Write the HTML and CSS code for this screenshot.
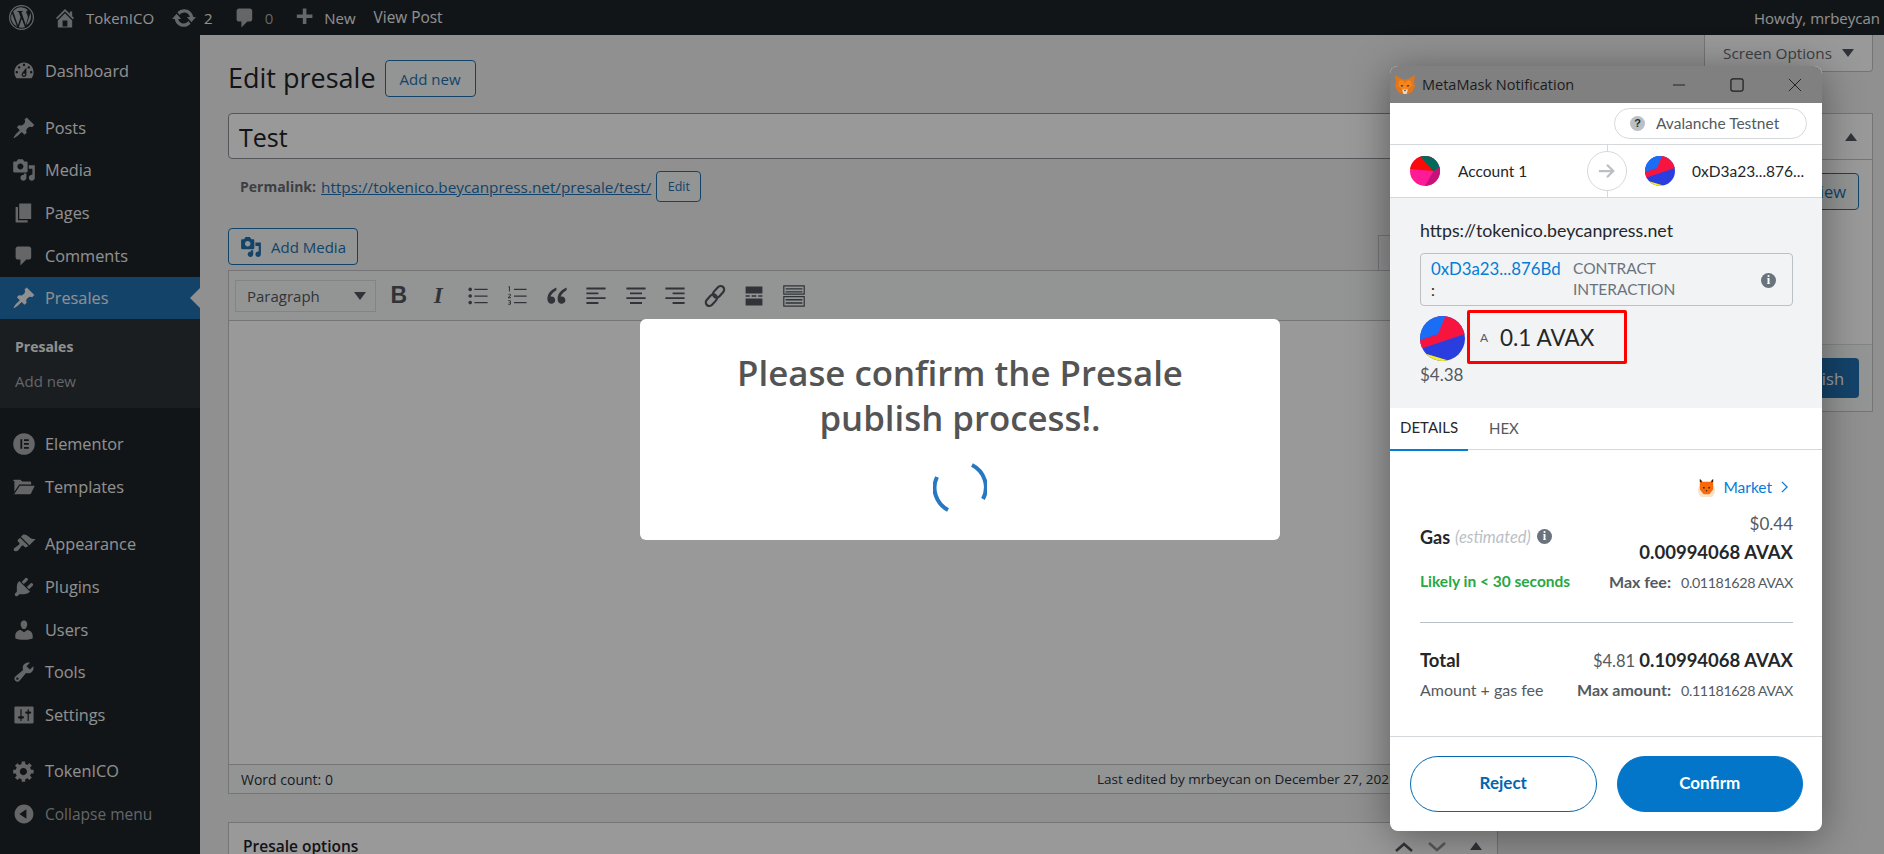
FILE: index.html
```html
<!DOCTYPE html>
<html lang="en">
    <head>
        <meta charset="UTF-8">
        <title>Edit presale</title>
        <link rel="stylesheet" href="styles.css">
    </head>
    <body>
        <div class="adminbar">
            <svg class="bar-logo" viewBox="0 0 20 20"><path fill-rule="evenodd" d="M10 0a10 10 0 1 0 0 20a10 10 0 0 0 0-20zM10 1a9 9 0 1 1 0 18a9 9 0 0 1 0-18z"/><path d="M10 1.700a8.300 8.300 0 0 0-7 3.900h.5l3.600 10.600l2.200-6.400l-1.500-4.200H6.900v-.8h4v.8h-1l3.500 10.400l1.200-3.900c.6-1.900.7-2.700.2-4c-.5-1.100-1-1.600-1-2.500c0-.8.6-1.500 1.500-1.500A8.300 8.300 0 0 0 10 1.700zM2.400 6.600a8.300 8.300 0 0 0 4.100 10.900zM10.200 10.900l-2.400 6.900a8.300 8.300 0 0 0 5 0zM16.800 5.900c.1 1.200-.2 2.300-.7 3.600l-2.300 6.900a8.300 8.300 0 0 0 3-10.500z"/></svg>
            <svg class="bar-icon bar-home" viewBox="0 0 20 20"><path d="M16 8.500l1.530 1.530-1.060 1.060L10 4.620l-6.470 6.470-1.060-1.060L10 2.500l4 4v-2h2v4zm-6-2.460l6 5.990V18H4v-5.970zM12 17v-5H8v5h4z"/></svg>
            <span class="bar-text bar-site">TokenICO</span>
            <svg class="bar-icon bar-update" viewBox="0 0 20 20"><path d="M10.200 3.280c3.530 0 6.430 2.610 6.920 6h2.080l-3.500 4-3.500-4h2.320c-.45-1.970-2.210-3.450-4.320-3.450-1.450 0-2.730.71-3.540 1.780L4.950 5.660C6.230 4.200 8.110 3.280 10.200 3.280zm-.4 13.440c-3.520 0-6.430-2.610-6.920-6H.8l3.500-4c1.170 1.330 2.330 2.670 3.500 4H5.480c.45 1.970 2.210 3.450 4.320 3.450 1.450 0 2.730-.71 3.540-1.780l1.710 1.950c-1.280 1.460-3.150 2.380-5.250 2.380z"/></svg>
            <span class="bar-text bar-count">2</span>
            <svg class="bar-icon bar-comment" viewBox="0 0 20 20"><path d="M5 2h9c1.100 0 2 .9 2 2v7c0 1.100-.9 2-2 2h-2l-5 5v-5H5c-1.100 0-2-.9-2-2V4c0-1.100.9-2 2-2z"/></svg>
            <span class="bar-text bar-count bar-zero">0</span>
            <svg class="bar-icon bar-plus" viewBox="0 0 20 20"><path d="M17 7v3h-5v5H9v-5H4V7h5V2h3v5h5z"/></svg>
            <span class="bar-text bar-new">New</span>
            <span class="bar-text bar-view">View Post</span>
            <span class="bar-text bar-howdy">Howdy, mrbeycan</span>
        </div>

        <div class="layout">
            <div class="sidebar">
                <div class="menu-item first">
                    <svg viewBox="0 0 20 20"><path d="M3.760 16h12.480c1.100-1.370 1.760-3.110 1.760-5 0-4.420-3.580-8-8-8s-8 3.580-8 8c0 1.890.66 3.630 1.760 5zM10 4c.55 0 1 .45 1 1s-.45 1-1 1-1-.45-1-1 .45-1 1-1zM6 6c.55 0 1 .45 1 1s-.45 1-1 1-1-.45-1-1 .45-1 1-1zm8 0c.55 0 1 .45 1 1s-.45 1-1 1-1-.45-1-1 .45-1 1-1zm-5.370 5.550L12 7v6c0 1.100-.9 2-2 2s-2-.9-2-2c0-.57.24-1.080.63-1.450zM4 10c.55 0 1 .45 1 1s-.45 1-1 1-1-.45-1-1 .45-1 1-1zm12 0c.55 0 1 .45 1 1s-.45 1-1 1-1-.45-1-1 .45-1 1-1zm-5 3c0-.55-.45-1-1-1s-1 .45-1 1 .45 1 1 1 1-.45 1-1z"/></svg>
                    <span>Dashboard</span>
                </div>
                <div class="menu-group">
                    <div class="menu-item">
                        <svg viewBox="0 0 20 20"><path d="M10.440 3.020l1.820-1.820 6.360 6.350-1.830 1.820c-1.050-.68-2.480-.57-3.410.36l-.75.75c-.92.93-1.040 2.350-.35 3.410l-1.830 1.820-2.410-2.410-2.800 2.790c-.42.42-3.380 2.710-3.800 2.290s1.860-3.390 2.280-3.810l2.790-2.790L4.100 9.360l1.830-1.820c1.050.69 2.480.57 3.400-.36l.75-.75c.93-.92 1.050-2.350.36-3.410z"/></svg>
                        <span>Posts</span>
                    </div>
                    <div class="menu-item">
                        <svg viewBox="0 0 20 20"><path d="M13 11V4c0-.55-.45-1-1-1h-1.670L9 1H5L3.670 3H2c-.55 0-1 .45-1 1v7c0 .55.45 1 1 1h10c.55 0 1-.45 1-1zM7 4.500c1.380 0 2.500 1.120 2.500 2.500S8.380 9.500 7 9.500 4.500 8.380 4.500 7 5.620 4.500 7 4.500zM14 6h5v10.500c0 1.380-1.120 2.500-2.500 2.500S14 17.880 14 16.500s1.120-2.500 2.500-2.500c.17 0 .34.02.5.05V9h-3V6zm-4 8.050V13h2v3.500c0 1.380-1.120 2.500-2.500 2.500S7 17.880 7 16.500 8.120 14 9.500 14c.17 0 .34.02.5.05z"/></svg>
                        <span>Media</span>
                    </div>
                    <div class="menu-item">
                        <svg viewBox="0 0 20 20"><path d="M6 15V2h10v13H6zm-1 1h8v2H3V5h2v11z"/></svg>
                        <span>Pages</span>
                    </div>
                    <div class="menu-item">
                        <svg viewBox="0 0 20 20"><path d="M5 2h9c1.100 0 2 .9 2 2v7c0 1.100-.9 2-2 2h-2l-5 5v-5H5c-1.100 0-2-.9-2-2V4c0-1.100.9-2 2-2z"/></svg>
                        <span>Comments</span>
                    </div>
                    <div class="menu-item current">
                        <svg viewBox="0 0 20 20"><path d="M10.440 3.020l1.820-1.820 6.360 6.350-1.830 1.820c-1.050-.68-2.480-.57-3.410.36l-.75.75c-.92.93-1.040 2.350-.35 3.410l-1.830 1.820-2.410-2.410-2.800 2.790c-.42.42-3.380 2.710-3.800 2.290s1.860-3.390 2.280-3.810l2.790-2.790L4.100 9.360l1.830-1.820c1.050.69 2.480.57 3.400-.36l.75-.75c.93-.92 1.050-2.350.36-3.410z"/></svg>
                        <span>Presales</span>
                    </div>
                    <div class="submenu">
                        <div class="submenu-item active">Presales</div>
                        <div class="submenu-item">Add new</div>
                    </div>
                </div>
                <div class="menu-group elementor-group">
                    <div class="menu-item">
                        <svg viewBox="0 0 20 20"><path fill-rule="evenodd" d="M10 1a9 9 0 1 0 0 18a9 9 0 0 0 0-18zM7 6h1.500v8H7zM10 6h4v1.500h-4zM10 9.200h4v1.500h-4zM10 12.500h4V14h-4z"/></svg>
                        <span>Elementor</span>
                    </div>
                    <div class="menu-item">
                        <svg viewBox="0 0 20 20"><path d="M1 5c0-.6.4-1 1-1h5l1.500 1.500H15c.6 0 1 .4 1 1V8H6L2 14V5zM6.500 9H19l-3.500 7H1.800z"/></svg>
                        <span>Templates</span>
                    </div>
                </div>
                <div class="menu-group appearance-group">
                    <div class="menu-item">
                        <svg viewBox="0 0 20 20"><path d="M14.480 11.060L7.410 3.990l1.500-1.500c.5-.56 2.300-.47 3.510.32 1.210.8 1.430 1.280 2.910 2.100 1.180.64 2.450 1.260 4.450.85zm-.71.71L6.700 4.700 4.930 6.470c-.39.39-.39 1.020 0 1.410l1.060 1.060c.39.39.39 1.030 0 1.420-.6.6-1.430 1.110-2.210 1.690-.35.26-.7.53-1.010.84C1.430 13.230 1 14.910 1.800 15.710c.8.8 2.480.37 3.820-.97.32-.32.58-.67.84-1.010.58-.78 1.090-1.610 1.690-2.210.39-.39 1.030-.39 1.420 0l1.060 1.060c.39.39 1.020.39 1.410 0z"/></svg>
                        <span>Appearance</span>
                    </div>
                    <div class="menu-item">
                        <svg viewBox="0 0 20 20"><path d="M13.110 4.360L9.870 7.600 8 5.730l3.240-3.240c.35-.34 1.050-.2 1.560.32.52.51.66 1.210.31 1.550zm-8 1.770l.91-1.120 9.010 9.010-1.190.84c-.71.71-2.630 1.160-3.820 1.160H6.140L4.900 17.260c-.59.59-1.540.59-2.120 0-.59-.58-.59-1.530 0-2.120l1.240-1.240v-3.880c0-1.130.4-3.190 1.090-3.890zm7.260 3.970l3.240-3.240c.34-.35 1.040-.21 1.550.31.52.51.66 1.210.31 1.550l-3.240 3.250z"/></svg>
                        <span>Plugins</span>
                    </div>
                    <div class="menu-item">
                        <svg viewBox="0 0 20 20"><path d="M10 9.250c-2.270 0-2.730-3.440-2.730-3.440C7 4.020 7.820 2 9.970 2c2.160 0 2.980 2.020 2.710 3.810 0 0-.41 3.440-2.680 3.440zm0 2.570L12.720 10c2.390 0 4.520 2.330 4.520 4.530v2.490s-3.650 1.130-7.240 1.130c-3.650 0-7.240-1.130-7.240-1.130v-2.490c0-2.250 1.940-4.480 4.470-4.480z"/></svg>
                        <span>Users</span>
                    </div>
                    <div class="menu-item">
                        <svg viewBox="0 0 20 20"><path d="M16.680 9.770c-1.340 1.340-3.300 1.670-4.950.99l-5.410 6.520c-.99.99-2.590.99-3.580 0s-.99-2.590 0-3.570l6.520-5.420c-.68-1.650-.35-3.610.99-4.950 1.280-1.280 3.120-1.620 4.720-1.060l-2.890 2.890 2.820 2.820 2.860-2.870c.53 1.580.18 3.390-1.080 4.650zM3.810 16.210c.4.39 1.040.39 1.430 0 .4-.4.4-1.040 0-1.430-.39-.4-1.030-.4-1.430 0-.39.39-.39 1.030 0 1.430z"/></svg>
                        <span>Tools</span>
                    </div>
                    <div class="menu-item">
                        <svg viewBox="0 0 20 20"><path d="M18 16V4c0-.55-.45-1-1-1H3c-.55 0-1 .45-1 1v12c0 .55.45 1 1 1h14c.55 0 1-.45 1-1zM8 11h1c.55 0 1 .45 1 1s-.45 1-1 1H8v1.500c0 .28-.22.5-.5.5s-.5-.22-.5-.5V13H6c-.55 0-1-.45-1-1s.45-1 1-1h1V5.500c0-.28.22-.5.5-.5s.5.22.5.5V11zm5-2h-1c-.55 0-1-.45-1-1s.45-1 1-1h1V5.500c0-.28.22-.5.5-.5s.5.22.5.5V7h1c.55 0 1 .45 1 1s-.45 1-1 1h-1v5.500c0 .28-.22.5-.5.5s-.5-.22-.5-.5V9z"/></svg>
                        <span>Settings</span>
                    </div>
                </div>
                <div class="menu-group token-group">
                    <div class="menu-item">
                        <svg viewBox="0 0 20 20"><path d="M18 12h-2.180c-.17.7-.44 1.350-.81 1.930l1.540 1.540-2.100 2.100-1.540-1.540c-.58.36-1.230.63-1.910.79V19H8v-2.180c-.68-.16-1.330-.43-1.910-.79l-1.540 1.540-2.120-2.120 1.540-1.540c-.36-.58-.63-1.230-.79-1.910H1V9.030h2.170c.16-.7.44-1.350.8-1.940L2.430 5.550l2.100-2.100 1.540 1.540c.58-.37 1.240-.64 1.930-.81V2h3v2.180c.68.16 1.330.43 1.910.79l1.540-1.540 2.120 2.120-1.540 1.540c.36.59.64 1.240.8 1.940H18V12zm-8.500 1.500c1.660 0 3-1.340 3-3s-1.340-3-3-3-3 1.340-3 3 1.340 3 3 3z"/></svg>
                        <span>TokenICO</span>
                    </div>
                    <div class="menu-item collapse">
                        <svg viewBox="0 0 20 20"><path d="M10 2.160c4.330 0 7.840 3.510 7.840 7.840s-3.510 7.840-7.840 7.840S2.160 14.330 2.160 10 5.710 2.160 10 2.160zm2 11.720V6.120L6.180 9.970z"/></svg>
                        <span>Collapse menu</span>
                    </div>
                </div>
            </div>

            <div class="content">
                <div class="page-head">
                    <h1>Edit presale</h1>
                    <a class="btn add-new">Add new</a>
                    <div class="screen-tab">Screen Options <i class="caret"></i></div>
                </div>
                <div class="columns">
                    <div class="main-col">
                        <div class="title-input">Test</div>
                        <div class="permalink">
                            <b>Permalink:</b>
                            <a>https://tokenico.beycanpress.net/presale/test/</a>
                            <span class="btn edit-slug">Edit</span>
                        </div>
                        <div class="media-row">
                            <span class="btn add-media">
                                <svg viewBox="0 0 20 20"><path d="M13 11V4c0-.55-.45-1-1-1h-1.670L9 1H5L3.670 3H2c-.55 0-1 .45-1 1v7c0 .55.45 1 1 1h10c.55 0 1-.45 1-1zM7 4.500c1.380 0 2.500 1.120 2.500 2.500S8.380 9.500 7 9.500 4.500 8.380 4.500 7 5.620 4.500 7 4.500zM14 6h5v10.500c0 1.380-1.120 2.500-2.500 2.500S14 17.880 14 16.500s1.120-2.500 2.500-2.500c.17 0 .34.02.5.05V9h-3V6zm-4 8.050V13h2v3.500c0 1.380-1.120 2.500-2.500 2.500S7 17.880 7 16.500 8.120 14 9.500 14c.17 0 .34.02.5.05z"/></svg>
                                Add Media
                            </span>
                            <div class="editor-tabs"></div>
                        </div>
                        <div class="editor">
                            <div class="toolbar">
                                <div class="format-select">Paragraph <i class="caret"></i></div>
                                <div class="tools">
                                    <span class="tool tool-b">B</span>
                                    <span class="tool tool-i">I</span>
                                    <span class="tool"><svg viewBox="0 0 20 20"><circle cx="3.500" cy="4.500" r="1.500"/><circle cx="3.500" cy="10" r="1.500"/><circle cx="3.500" cy="15.500" r="1.500"/><path d="M7 4h11v1.100H7zM7 9.500h11v1.100H7zM7 15h11v1.100H7z"/></svg></span>
                                    <span class="tool"><svg viewBox="0 0 20 20"><path d="M2.500 2.500l1-.6h.6v4.300H3.300V3zM2.500 8.500c.6-.7 2.500-.6 2.500.6c0 .8-1 1.300-1.600 2h1.600v.7H2.500v-.7c.6-.8 1.700-1.400 1.700-2c0-.5-1-.4-1.500 0zM2.500 13.800c.8-.6 2.500-.4 2.500.6c0 .5-.3.7-.6.9c.4.1.7.4.7.9c0 1.200-1.900 1.300-2.600.6l.3-.5c.4.4 1.500.4 1.500-.2c0-.4-.5-.5-1-.5v-.6c.5 0 .9-.1.9-.5c0-.5-1-.4-1.500 0zM7.500 4H18v1.100H7.500zM7.500 9.500H18v1.100H7.500zM7.500 15H18v1.100H7.500z"/></svg></span>
                                    <span class="tool"><svg viewBox="0 0 20 20"><path d="M9.500 3C5 5 2 8 2 12.500c0 2.600 1.400 4 3.300 4c1.700 0 3.200-1.300 3.200-3c0-1.700-1.300-3-3-3c-.4 0-.7.1-1 .2c.3-1.800 2.300-4 5-5.500zM18 3c-4.500 2-7.500 5-7.500 9.500c0 2.600 1.400 4 3.300 4c1.700 0 3.200-1.300 3.200-3c0-1.700-1.300-3-3-3c-.4 0-.7.1-1 .2c.3-1.800 2.300-4 5-5.500z"/></svg></span>
                                    <span class="tool"><svg viewBox="0 0 20 20"><path d="M2 3h16v1.600H2zM2 7h10v1.600H2zM2 11h16v1.600H2zM2 15h10v1.600H2z"/></svg></span>
                                    <span class="tool"><svg viewBox="0 0 20 20"><path d="M2 3h16v1.600H2zM5 7h10v1.600H5zM2 11h16v1.600H2zM5 15h10v1.600H5z"/></svg></span>
                                    <span class="tool"><svg viewBox="0 0 20 20"><path d="M2 3h16v1.600H2zM8 7h10v1.600H8zM2 11h16v1.600H2zM8 15h10v1.600H8z"/></svg></span>
                                    <span class="tool"><svg viewBox="0 0 20 20"><g fill="none" stroke-width="1.800" class="chain"><rect x="10" y="1" width="6" height="11" rx="3" transform="rotate(42 13 6.500)"/><rect x="4" y="8" width="6" height="11" rx="3" transform="rotate(42 7 13.500)"/></g></svg></span>
                                    <span class="tool"><svg viewBox="0 0 20 20"><path d="M3 2h14v6H3zM3 12h14v6H3zM3 9.300h3.500v1.400H3zM8 9.300h4v1.400H8zM13.500 9.300H17v1.400h-3.500z"/></svg></span>
                                    <span class="tool"><svg viewBox="0 0 20 20"><path fill-rule="evenodd" d="M1 1h18v8H1zM2 2v6h16V2zM1 10h18v9H1zM2 11v7h16v-7z"/><path d="M3 3.500h14v1H3zM3 6h14v1H3zM3 12.500h14v1.200H3zM3 15.200h14v1.200H3z"/></svg></span>
                                </div>
                            </div>
                            <div class="editor-area"></div>
                            <div class="editor-foot">
                                <span class="word-count">Word count: 0</span>
                                <span>Last edited by mrbeycan on December 27, 2021 at 9:43 pm</span>
                            </div>
                        </div>
                        <div class="postbox">
                            <h2>Presale options</h2>
                            <div class="postbox-handles">
                                <svg viewBox="0 0 20 12"><path d="M2 10l8-7l8 7" fill="none" stroke-width="2.500" class="chev"/></svg>
                                <svg viewBox="0 0 20 12" class="chev-down"><path d="M2 2l8 7l8-7" fill="none" stroke-width="2.500" class="chev"/></svg>
                                <i class="caret up"></i>
                            </div>
                        </div>
                    </div>
                    <div class="side-col">
                        <div class="publish-box">
                            <div class="publish-head"><i class="caret up"></i></div>
                            <div class="publish-body"><span class="btn preview">Preview</span></div>
                            <div class="publish-foot"><span class="publish-btn">Publish</span></div>
                        </div>
                    </div>
                </div>
            </div>
        </div>

        <div class="dim"></div>

        <div class="confirm-modal">
            <h2>Please confirm the Presale<br>publish process!.</h2>
            <svg class="loader" viewBox="0 0 54 54"><path d="M39 5A25 25 0 0 1 50 39M4 17A25 25 0 0 0 15 50" fill="none" stroke="#2778c4" stroke-width="4"/></svg>
        </div>

        <div class="mm-window">
            <div class="mm-titlebar">
                <svg class="mm-fox" viewBox="0 0 20 20"><path fill="#e2761b" d="M0 0l7.500 4.500h5L20 0l-1 7l1 4l-3 6l-4 2H7l-4-2l-3-6l1-4z"/><path fill="#f6851b" d="M4 6l3-1l3 3l3-3l3 1l1 5l-4 3H7l-4-3z"/><path fill="#f5d7b8" d="M7 14.500h6l-1.500 4.500h-3z"/><path fill="#233447" d="M5.500 10l3 .5l-1.500 1.500zM14.500 10l-3 .5l1.500 1.500zM9 15h2l-1 1.500z"/></svg>
                <span class="mm-title">MetaMask Notification</span>
                <svg class="win-btn" viewBox="0 0 15 15"><path d="M1 7.500h13" stroke="#1c1c1c" stroke-width="1"/></svg>
                <svg class="win-btn" viewBox="0 0 15 15"><rect x="1" y="1" width="13" height="13" rx="2" fill="none" stroke="#1c1c1c" stroke-width="1.300"/></svg>
                <svg class="win-btn" viewBox="0 0 15 15"><path d="M1 1l13 13M14 1L1 14" stroke="#1c1c1c" stroke-width="1"/></svg>
            </div>
            <div class="mm-network-row">
                <div class="mm-network"><i class="mm-help">?</i>Avalanche Testnet</div>
            </div>
            <div class="mm-accounts">
                <div class="mm-account from">
                    <svg class="avatar" viewBox="0 0 30 30"><rect width="30" height="30" fill="#ff1a96"/><path fill="#fb0a0a" d="M0 0h30L23 15L0 13z"/><path fill="#03695c" d="M10 0h20v13l-6 3z"/><path fill="#c7127a" d="M30 10v20H15l8-14z"/></svg>
                    <span>Account 1</span>
                </div>
                <div class="mm-account to">
                    <svg class="avatar" viewBox="0 0 30 30"><use href="#token-pie"/></svg>
                    <span>0xD3a23...876...</span>
                </div>
                <div class="mm-arrow"><svg viewBox="0 0 20 20"><path d="M1 10h16M10 3l7 7l-7 7" fill="none" stroke="#bbc0c5" stroke-width="2.500"/></svg></div>
            </div>
            <div class="mm-summary">
                <div class="mm-origin">https://tokenico.beycanpress.net</div>
                <div class="mm-contract">
                    <div class="mm-addr"><a>0xD3a23...876Bd</a><br>:</div>
                    <div class="mm-type">Contract interaction</div>
                    <i class="mm-info">i</i>
                </div>
                <div class="mm-amount">
                    <svg class="token" viewBox="0 0 30 30"><defs><g id="token-pie"><rect width="30" height="30" fill="#2a3ee0"/><path fill="#f7153f" d="M12 0h18v12L0 22v-6l12-4z"/><path fill="#1a6ef5" d="M0 0h17l-5 12L0 16z"/><path fill="#f4f01a" d="M0 24l20 6H0z"/></g></defs><use href="#token-pie"/></svg>
                    <div class="mm-redbox"><span class="small-a">A</span><span class="mm-value">0.1 AVAX</span></div>
                </div>
                <div class="mm-fiat">$4.38</div>
            </div>
            <div class="mm-tabs">
                <span class="mm-tab active">DETAILS</span>
                <span class="mm-tab">HEX</span>
            </div>
            <div class="mm-details">
                <div class="mm-market">
                    <svg class="market-fox" viewBox="0 0 20 20"><circle cx="10" cy="13" r="9" fill="#fbe3c8"/><path fill="#f66a0a" d="M3 1l3 3h8l3-3v11l-4 5H7l-4-5z"/><path fill="#241b12" d="M3 1l1.800 1.800v2L3 4zM17 1l-1.800 1.800v2L17 4zM6.500 9.500h1.500V11H6.500zM12 9.500h1.500V11H12zM9 13h2l-1 1.500z"/></svg>
                    <a>Market</a>
                    <svg class="chevron" viewBox="0 0 8 14"><path d="M1 1l6 6l-6 6" fill="none" stroke="#037dd6" stroke-width="1.500"/></svg>
                </div>
                <div class="mm-row gas">
                    <div class="mm-label"><b>Gas</b> <em>(estimated)</em> <i class="mm-info">i</i></div>
                    <div class="mm-right"><div>$0.44</div><b>0.00994068 AVAX</b></div>
                </div>
                <div class="mm-row sub">
                    <span class="likely">Likely in &lt; 30 seconds</span>
                    <span><b>Max fee:</b><span class="sub-value">0.01181628 AVAX</span></span>
                </div>
                <hr class="mm-sep">
                <div class="mm-row total">
                    <b>Total</b>
                    <span>$4.81 <b>0.10994068 AVAX</b></span>
                </div>
                <div class="mm-row sub">
                    <span>Amount + gas fee</span>
                    <span><b>Max amount:</b><span class="sub-value">0.11181628 AVAX</span></span>
                </div>
            </div>
            <div class="mm-footer">
                <span class="mm-btn reject">Reject</span>
                <span class="mm-btn confirm">Confirm</span>
            </div>
        </div>
    </body>
</html>
```

FILE: styles.css
```css
body {
    margin: 0;
    width: 1884px;
    height: 854px;
    overflow: hidden;
    background-color: #f0f0f1;
    color: #1d2327;
    font-family: "Open Sans", "Noto Sans", sans-serif;
    font-size: 15px;
    position: relative;
}

svg {
    fill: currentColor;
    flex-shrink: 0;
}

/* admin bar */
.adminbar {
    height: 35px;
    background-color: #1d2327;
    color: #f0f0f1;
    display: flex;
    align-items: center;
    padding: 0 4px 0 9px;
}

.bar-logo { width: 25px; height: 25px; color: #a7aaad; }
.bar-icon { width: 24px; height: 24px; color: #a7aaad; }
.bar-text { font-size: 15px; white-space: nowrap; }

.bar-home { margin-left: 19px; }
.bar-site { margin-left: 9px; }
.bar-update { margin-left: 17px; width: 26px; height: 26px; }
.bar-count { margin-left: 7px; }
.bar-comment { margin-left: 20px; }
.bar-zero { margin-left: 8px; color: #a7aaad; }
.bar-plus { margin-left: 19px; }
.bar-new { margin-left: 8px; }
.bar-view { margin-left: 18px; font-size: 15.4px; }
.bar-howdy { margin-left: auto; }

.layout {
    display: flex;
    height: 819px;
}

/* sidebar */
.sidebar {
    width: 200px;
    flex-shrink: 0;
    background-color: #1d2327;
    color: #f0f0f1;
    padding-top: 15px;
}

.menu-item {
    height: 42.8px;
    display: flex;
    align-items: center;
    padding-left: 12px;
    font-size: 16.3px;
    position: relative;
}

.menu-item svg {
    width: 24px;
    height: 24px;
    margin-right: 9px;
    color: #a7aaad;
}

.menu-item.collapse { color: #a7aaad; font-size: 15.5px; }
.menu-item.current { height: 42px; background-color: #2271b1; }
.menu-item.current svg { color: #f0f0f1; }

.menu-item.current::after {
    content: "";
    position: absolute;
    right: 0;
    top: 11px;
    border: 10px solid transparent;
    border-left: 0;
    border-right-color: #f0f0f1;
}

.menu-group { margin-top: 13.5px; }
.elementor-group { margin-top: 14.5px; }
.appearance-group { margin-top: 14px; }
.token-group { margin-top: 13px; }

.submenu {
    height: 89px;
    background-color: #2c3338;
    padding-top: 11px;
    box-sizing: border-box;
}

.submenu-item {
    height: 34px;
    line-height: 34px;
    padding-left: 15px;
    font-size: 15px;
    color: #a7aaad;
}

.submenu-item.active { color: #f0f0f1; font-weight: 700; font-size: 14px; }

/* main area */
.content {
    flex: 1;
    padding: 0 11px 0 28px;
    min-width: 0;
}

.page-head {
    height: 78px;
    display: flex;
    align-items: flex-start;
}

h1 {
    margin: 24px 0 0;
    font-size: 27px;
    line-height: 38px;
    font-weight: 400;
}

.btn {
    border: 1px solid #2271b1;
    border-radius: 4px;
    color: #2271b1;
    background-color: #f6f7f7;
    box-sizing: border-box;
    display: inline-flex;
    align-items: center;
    justify-content: center;
    white-space: nowrap;
}

.add-new {
    margin: 25px 0 0 9px;
    width: 91px;
    height: 37px;
    font-size: 15px;
}

.screen-tab {
    margin-left: auto;
    width: 169px;
    height: 37px;
    box-sizing: border-box;
    background-color: #fff;
    border: 1px solid #c3c4c7;
    border-top: 0;
    border-radius: 0 0 4px 4px;
    color: #646970;
    display: flex;
    align-items: center;
    justify-content: center;
    gap: 10px;
    font-size: 15.3px;
}

.caret {
    border-left: 6px solid transparent;
    border-right: 6px solid transparent;
    border-top: 8px solid #50575e;
    display: inline-block;
}

.caret.up {
    border-top: 0;
    border-bottom: 8px solid #50575e;
}

.columns {
    display: flex;
    gap: 20px;
}

.main-col { width: 1270px; }
.side-col { width: 355px; }

.title-input {
    height: 46px;
    box-sizing: border-box;
    background-color: #fff;
    border: 1px solid #8c8f94;
    border-radius: 4px;
    padding-left: 10px;
    font-size: 25px;
    line-height: 46px;
}

.permalink {
    margin-top: 12px;
    height: 31px;
    padding-left: 12px;
    display: flex;
    align-items: center;
    font-size: 14px;
    color: #646970;
}

.permalink b { margin-right: 5px; }
.permalink a { color: #2271b1; text-decoration: underline; font-size: 15.3px; }

.edit-slug {
    margin-left: 5px;
    width: 45px;
    height: 31px;
    font-size: 12.5px;
}

.media-row {
    margin-top: 26px;
    height: 42px;
    display: flex;
    justify-content: space-between;
    align-items: flex-start;
}

.add-media {
    width: 130px;
    height: 37px;
    gap: 9px;
    font-size: 15px;
}

.add-media svg { width: 22px; height: 22px; }

.editor-tabs {
    width: 120px;
    height: 35px;
    margin-top: 7px;
    box-sizing: border-box;
    border: 1px solid #c3c4c7;
    border-bottom: 0;
}

.editor {
    height: 524px;
    box-sizing: border-box;
    background-color: #fff;
    border: 1px solid #c3c4c7;
    display: flex;
    flex-direction: column;
}

.toolbar {
    height: 50px;
    flex-shrink: 0;
    box-sizing: border-box;
    background-color: #f6f7f7;
    border-bottom: 1px solid #c3c4c7;
    display: flex;
    align-items: center;
    padding-left: 6px;
}

.format-select {
    width: 141px;
    height: 32px;
    box-sizing: border-box;
    border: 1px solid #dcdcde;
    padding: 0 9px 0 11px;
    display: flex;
    align-items: center;
    justify-content: space-between;
    font-size: 15px;
    color: #50575e;
}

.tools {
    display: flex;
    margin-left: 3px;
    color: #50575e;
}

.tool {
    width: 39.5px;
    text-align: center;
    height: 26px;
    display: flex;
    align-items: center;
    justify-content: center;
}

.tool svg { width: 24px; height: 24px; }
.chain { stroke: currentColor; }

.tool-b { font: 700 23px "Liberation Sans", sans-serif; }
.tool-i { font: italic 700 23px "Liberation Serif", serif; }

.editor-area { flex: 1; }

.editor-foot {
    height: 29px;
    flex-shrink: 0;
    box-sizing: border-box;
    background-color: #f6f7f7;
    border-top: 1px solid #c3c4c7;
    padding-left: 12px;
    display: flex;
    align-items: center;
    font-size: 13.5px;
    white-space: nowrap;
    color: #2c3338;
}

.word-count { width: 856px; font-size: 14px; }

.postbox {
    margin-top: 28px;
    height: 60px;
    box-sizing: border-box;
    background-color: #fff;
    border: 1px solid #c3c4c7;
    padding: 12px 0 0 14px;
    display: flex;
    justify-content: space-between;
}

.postbox h2 {
    margin: 0;
    font-size: 15.5px;
    font-weight: 600;
}

.postbox-handles {
    display: flex;
    align-items: flex-start;
    padding: 6px 15px 0 0;
    color: #1d2327;
}

.postbox-handles svg { width: 20px; height: 12px; }
.chev { stroke: #50575e; }
.chev-down { margin-left: 13px; opacity: .6; }
.postbox-handles .caret { margin: 1px 0 0 23px; }

.publish-box {
    height: 299px;
    box-sizing: border-box;
    background-color: #fff;
    border: 1px solid #c3c4c7;
    display: flex;
    flex-direction: column;
}

.publish-head {
    height: 46px;
    box-sizing: border-box;
    border-bottom: 1px solid #c3c4c7;
    display: flex;
    justify-content: flex-end;
    align-items: center;
    padding-right: 15px;
}

.publish-body {
    flex: 1;
    padding: 13px 13px 0;
    display: flex;
    justify-content: flex-end;
    align-items: flex-start;
}

.preview {
    width: 100px;
    height: 37px;
    font-size: 16.5px;
    justify-content: flex-end;
    padding-right: 12px;
}

.publish-foot {
    height: 67px;
    box-sizing: border-box;
    background-color: #f6f7f7;
    border-top: 1px solid #dcdcde;
    padding: 13px 13px 0;
    display: flex;
    justify-content: flex-end;
}

.publish-btn {
    width: 100px;
    height: 40px;
    border-radius: 4px;
    background-color: #2271b1;
    color: #fff;
    display: flex;
    align-items: center;
    justify-content: flex-end;
    padding-right: 15px;
    box-sizing: border-box;
    font-size: 16.5px;
}

/* overlay */
.dim {
    position: absolute;
    inset: 0;
    background-color: rgba(0, 0, 0, .4);
}

.confirm-modal {
    position: absolute;
    left: 640px;
    top: 319px;
    width: 640px;
    height: 221px;
    background-color: #fff;
    border-radius: 6px;
    text-align: center;
    padding-top: 31px;
    box-sizing: border-box;
}

.confirm-modal h2 {
    margin: 0;
    font-size: 34.8px;
    line-height: 45px;
    font-weight: 600;
    color: #545454;
}

.loader {
    display: block;
    width: 54px;
    height: 54px;
    margin: 20px auto 0;
}

/* metamask window */
.mm-window {
    position: absolute;
    left: 1390px;
    top: 66px;
    width: 432px;
    height: 765px;
    background-color: #fff;
    border-radius: 8px;
    overflow: hidden;
    box-shadow: 0 6px 40px rgba(0, 0, 0, .4);
    display: flex;
    flex-direction: column;
    font-family: Lato, "Open Sans", sans-serif;
    color: #24272a;
}

.mm-titlebar {
    height: 37px;
    flex-shrink: 0;
    background-color: #808080;
    display: flex;
    align-items: center;
    padding-left: 5px;
    color: #1c1c1c;
    font-family: "Open Sans", sans-serif;
}

.mm-fox { width: 20px; height: 20px; }
.mm-title { margin: 0 0 0 7px; font-size: 14.5px; width: 250px; }
.win-btn { width: 14px; height: 14px; }
.mm-titlebar .win-btn + .win-btn { margin-left: 44px; }

.mm-network-row {
    height: 42px;
    flex-shrink: 0;
    box-sizing: border-box;
    border-bottom: 1px solid #d6d9dc;
    display: flex;
    justify-content: flex-end;
    align-items: center;
    padding: 0 15px 1px 0;
}

.mm-network {
    width: 193px;
    height: 31px;
    box-sizing: border-box;
    border: 1px solid #d6d9dc;
    border-radius: 16px;
    display: flex;
    align-items: center;
    padding-left: 15px;
    font-size: 15.5px;
    color: #535a61;
}

.mm-help {
    width: 15px;
    height: 15px;
    border-radius: 50%;
    background-color: #bbc0c5;
    color: #24272a;
    font: 700 11px/15px "Liberation Sans", sans-serif;
    text-align: center;
    margin-right: 11px;
}

.mm-accounts {
    height: 53px;
    flex-shrink: 0;
    box-sizing: border-box;
    border-bottom: 1px solid #d6d9dc;
    display: flex;
    position: relative;
    font-size: 15.5px;
}

.mm-account {
    display: flex;
    align-items: center;
}

.mm-account.from { width: 255px; padding-left: 20px; box-sizing: border-box; gap: 18px; }
.mm-account.to { gap: 17px; }

.avatar { width: 30px; height: 30px; border-radius: 50%; }

.mm-arrow {
    position: absolute;
    left: 197px;
    top: 6px;
    width: 40px;
    height: 40px;
    box-sizing: border-box;
    background-color: #fff;
    border: 1px solid #d6d9dc;
    border-radius: 50%;
    display: flex;
    align-items: center;
    justify-content: center;
}

.mm-arrow::before,
.mm-arrow::after {
    content: "";
    position: absolute;
    left: 19px;
    width: 1px;
    height: 7px;
    background-color: #d6d9dc;
}

.mm-arrow::before { top: -7px; }
.mm-arrow::after { bottom: -7px; }

.mm-arrow svg { width: 18px; height: 18px; }

.mm-summary {
    height: 210px;
    flex-shrink: 0;
    box-sizing: border-box;
    background-color: #f2f3f4;
    padding: 20px 29px 0 30px;
}

.mm-origin { height: 24px; line-height: 24px; font-size: 17.8px; }

.mm-contract {
    margin-top: 11px;
    height: 53px;
    box-sizing: border-box;
    border: 1px solid #bbc0c5;
    border-radius: 4px;
    padding: 4px 16px 0 10px;
    display: flex;
    line-height: 21px;
    font-size: 15.5px;
}

.mm-addr { width: 142px; flex-shrink: 0; }
.mm-addr a { color: #037dd6; font-size: 16.8px; }
.mm-type { width: 150px; text-transform: uppercase; color: #6a737d; }

.mm-info {
    width: 15px;
    height: 15px;
    border-radius: 50%;
    background-color: #6a737d;
    color: #fff;
    font: 700 12px/15px "Liberation Serif", serif;
    text-align: center;
    display: inline-block;
}

.mm-contract .mm-info { margin: 15px 0 0 auto; }

.mm-amount {
    margin-top: 4px;
    display: flex;
    align-items: center;
    height: 54px;
}

.token { width: 45px; height: 45px; border-radius: 50%; margin-top: 3px; }

.mm-redbox {
    margin-left: 2px;
    width: 160px;
    height: 54px;
    box-sizing: border-box;
    border: 3px solid #f00;
    border-radius: 2px;
    display: flex;
    align-items: center;
    padding-left: 10px;
}

.small-a { font-size: 12px; color: #535a61; width: 20px; }
.mm-value { font-size: 22.5px; }

.mm-fiat { height: 24px; line-height: 22px; font-size: 17px; color: #535a61; }

.mm-tabs {
    height: 42px;
    flex-shrink: 0;
    box-sizing: border-box;
    border-bottom: 1px solid #d6d9dc;
    display: flex;
    font-size: 15px;
}

.mm-tab {
    padding: 0 10px;
    line-height: 40px;
    color: #535a61;
    margin-left: 11px;
}

.mm-tab.active {
    width: 58px;
    margin-left: 0;
    color: #24272a;
    height: 41px;
    border-bottom: 2px solid #037dd6;
    line-height: 38px;
}

.mm-details {
    flex: 1;
    padding: 0 29px 0 30px;
    font-size: 17px;
    white-space: nowrap;
}

.mm-market {
    margin-top: 25px;
    height: 24px;
    display: flex;
    justify-content: flex-end;
    align-items: center;
    color: #037dd6;
    font-size: 15.5px;
    padding-right: 5px;
}

.market-fox { width: 19px; height: 19px; margin-right: 7px; }
.chevron { width: 7px; height: 12px; margin-left: 9px; }

.mm-row {
    display: flex;
    justify-content: space-between;
    align-items: center;
}

.mm-row.gas {
    margin-top: 11px;
    height: 56px;
    align-items: flex-start;
}

.mm-label { display: flex; align-items: center; gap: 5px; height: 56px; font-size: 18px; padding-bottom: 3px; box-sizing: border-box; }
.mm-label em { color: #bbc0c5; font-size: 16.5px; }
.mm-label .mm-info { margin-left: 1px; }

.mm-right { text-align: right; line-height: 28px; color: #535a61; }
.mm-right b { color: #24272a; font-size: 18.5px; }

.mm-row.sub {
    margin-top: 3px;
    height: 24px;
    font-size: 16px;
    color: #535a61;
}

.sub-value { margin-left: 10px; font-size: 14.3px; letter-spacing: -.4px; }
.likely { color: #28a745; font-weight: 700; font-size: 15.5px; }

.mm-sep {
    margin: 29px 0 0;
    border: 0;
    border-top: 1px solid #bbc0c5;
}

.mm-row.total {
    margin-top: 23px;
    height: 28px;
    font-size: 16.5px;
    color: #535a61;
}

.mm-row.total b { color: #24272a; font-size: 18.5px; }

.mm-footer {
    height: 95px;
    flex-shrink: 0;
    box-sizing: border-box;
    border-top: 1px solid #d6d9dc;
    padding: 19px 19px 0 20px;
    display: flex;
    gap: 20px;
}

.mm-btn {
    flex: 1;
    height: 56px;
    box-sizing: border-box;
    border: 1px solid #0366b0;
    border-radius: 28px;
    display: flex;
    align-items: center;
    justify-content: center;
    padding-bottom: 3px;
    font-size: 17px;
    font-weight: 700;
    color: #0366b0;
}

.mm-btn.confirm {
    background-color: #0376c9;
    border-color: #0376c9;
    color: #fff;
}
```
